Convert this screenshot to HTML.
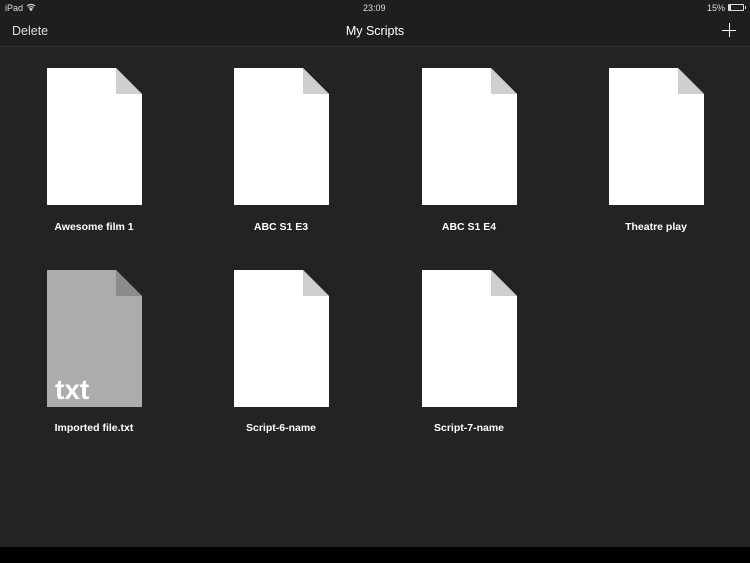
<!DOCTYPE html>
<html><head><meta charset="utf-8"><style>
*{margin:0;padding:0;box-sizing:border-box}
body{width:750px;height:563px;background:#232324;font-family:"Liberation Sans",sans-serif;position:relative;overflow:hidden;color:#fff}
.sb{position:absolute;top:0;left:0;right:0;height:16px;font-size:9px;color:#ddd;background:#1e1e1f}
.hdr{position:absolute;top:16px;left:0;right:0;height:31px;background:#1e1e1f;border-bottom:1px solid #333}
.doc{position:absolute;width:95px;height:137px}
.lbl{position:absolute;width:170px;text-align:center;font-size:10.5px;font-weight:bold;color:#fff}
.bot{position:absolute;left:0;right:0;top:547px;bottom:0;background:#000}
</style></head><body>
<div class="sb">
<span style="position:absolute;left:5px;top:3px">iPad</span>
<svg style="position:absolute;left:26px;top:3px" width="10" height="8" viewBox="0 0 10 8"><path d="M1 3a6 6 0 0 1 8 0M2.5 4.5a4 4 0 0 1 5 0M5 7.5l-1.2-1.5a2 2 0 0 1 2.4 0z" stroke="#ddd" fill="none" stroke-width="1.1"/></svg>
<span style="position:absolute;left:363px;top:3px">23:09</span>
<span style="position:absolute;left:707px;top:3px">15%</span>
<div style="position:absolute;left:728px;top:4px;width:16px;height:7px;border:1px solid #ddd;border-radius:1px"><div style="width:2px;height:5px;background:#ddd"></div></div>
<div style="position:absolute;left:745px;top:6px;width:1px;height:3px;background:#ddd"></div>
</div>
<div class="hdr">
<span style="position:absolute;left:12px;top:8px;font-size:12.5px;color:#ddd">Delete</span>
<span style="position:absolute;left:0;right:0;top:8px;text-align:center;font-size:12.5px">My Scripts</span>
<span style="position:absolute;left:722px;top:7px;width:14px;height:14px">
<span style="position:absolute;left:6.5px;top:0;width:1px;height:14px;background:#fff"></span>
<span style="position:absolute;left:0;top:6.5px;width:14px;height:1px;background:#fff"></span></span>
</div>

<svg class="doc" style="left:47px;top:68px" viewBox="0 0 95 137"><path d="M0 0H69L95 26V137H0Z" fill="#fff"/><path d="M69 0V26H95Z" fill="#cfcfcf"/></svg>
<svg class="doc" style="left:234px;top:68px" viewBox="0 0 95 137"><path d="M0 0H69L95 26V137H0Z" fill="#fff"/><path d="M69 0V26H95Z" fill="#cfcfcf"/></svg>
<svg class="doc" style="left:422px;top:68px" viewBox="0 0 95 137"><path d="M0 0H69L95 26V137H0Z" fill="#fff"/><path d="M69 0V26H95Z" fill="#cfcfcf"/></svg>
<svg class="doc" style="left:609px;top:68px" viewBox="0 0 95 137"><path d="M0 0H69L95 26V137H0Z" fill="#fff"/><path d="M69 0V26H95Z" fill="#cfcfcf"/></svg>

<svg class="doc" style="left:47px;top:270px" viewBox="0 0 95 137"><path d="M0 0H69L95 26V137H0Z" fill="#acacad"/><path d="M69 0V26H95Z" fill="#8b8b8c"/><text x="8" y="129" font-family="Liberation Sans,sans-serif" font-weight="bold" font-size="28" fill="#fff">txt</text></svg>
<svg class="doc" style="left:234px;top:270px" viewBox="0 0 95 137"><path d="M0 0H69L95 26V137H0Z" fill="#fff"/><path d="M69 0V26H95Z" fill="#cfcfcf"/></svg>
<svg class="doc" style="left:422px;top:270px" viewBox="0 0 95 137"><path d="M0 0H69L95 26V137H0Z" fill="#fff"/><path d="M69 0V26H95Z" fill="#cfcfcf"/></svg>

<div class="lbl" style="left:9px;top:221px">Awesome film 1</div>
<div class="lbl" style="left:196px;top:221px">ABC S1 E3</div>
<div class="lbl" style="left:384px;top:221px">ABC S1 E4</div>
<div class="lbl" style="left:571px;top:221px">Theatre play</div>
<div class="lbl" style="left:9px;top:422px">Imported file.txt</div>
<div class="lbl" style="left:196px;top:422px">Script-6-name</div>
<div class="lbl" style="left:384px;top:422px">Script-7-name</div>
<div class="bot"></div>
</body></html>
